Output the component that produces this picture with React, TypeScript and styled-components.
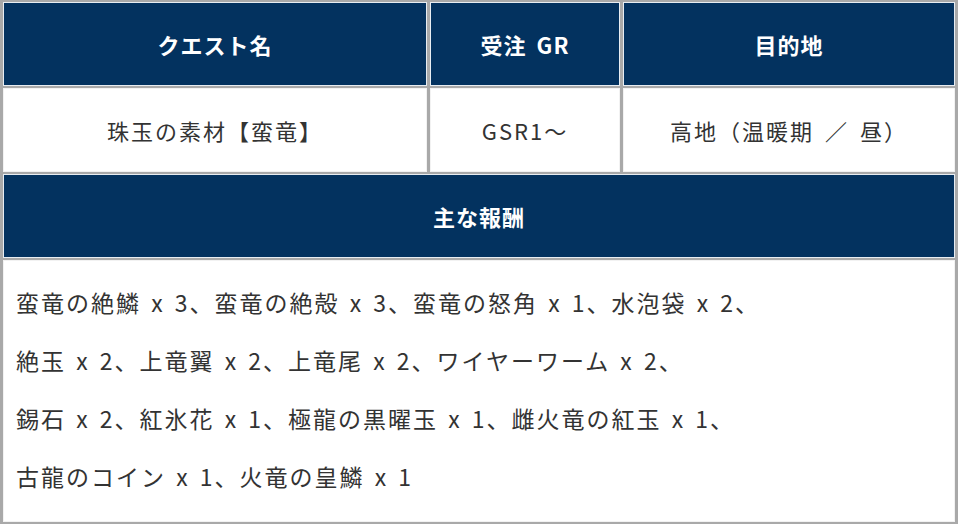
import styled, { createGlobalStyle } from "styled-components";

const GlobalStyle = createGlobalStyle`
  html, body {
    margin: 0;
    padding: 0;
    background: #ffffff;
  }
  body {
    font-family: "Noto Sans CJK JP", "Noto Sans", sans-serif;
    color: #333333;
  }
`;

const Table = styled.table`
  width: 958px;
  table-layout: fixed;
  border-collapse: separate;
  border-spacing: 3px 2px;
  background: #a9a9a9;
`;

const HeadCell = styled.th<{ $height: number }>`
  height: ${(p) => p.$height}px;
  padding: 0;
  background: #03325f;
  border: 1px solid #e8edf2;
  color: #ffffff;
  font-size: 22px;
  font-weight: 700;
  letter-spacing: 1px;
  word-spacing: 4px;
  text-align: center;
  vertical-align: middle;
`;

const DataCell = styled.td`
  height: 82px;
  padding: 0;
  background: #ffffff;
  border: 1px solid #f2f2f2;
  font-size: 22px;
  letter-spacing: 2px;
  word-spacing: 4px;
  text-align: center;
  vertical-align: middle;
  color: #333333;
`;

const RewardCell = styled.td`
  height: 236px;
  padding: 12px;
  background: #ffffff;
  border: 1px solid #f2f2f2;
  vertical-align: top;
`;

const RewardLine = styled.p`
  margin: 0;
  font-size: 23px;
  letter-spacing: 2px;
  word-spacing: 3px;
  line-height: 58px;
  white-space: nowrap;
  color: #333333;
`;

const rewards = [
  "蛮竜の絶鱗 x 3、蛮竜の絶殻 x 3、蛮竜の怒角 x 1、水泡袋 x 2、",
  "絶玉 x 2、上竜翼 x 2、上竜尾 x 2、ワイヤーワーム x 2、",
  "錫石 x 2、紅氷花 x 1、極龍の黒曜玉 x 1、雌火竜の紅玉 x 1、",
  "古龍のコイン x 1、火竜の皇鱗 x 1",
];

export default function App() {
  return (
    <>
      <GlobalStyle />
      <Table>
        <colgroup>
          <col style={{ width: 424 }} />
          <col style={{ width: 190 }} />
          <col style={{ width: 332 }} />
        </colgroup>
        <tbody>
          <tr>
            <HeadCell $height={82}>クエスト名</HeadCell>
            <HeadCell $height={82}>受注 GR</HeadCell>
            <HeadCell $height={82}>目的地</HeadCell>
          </tr>
          <tr>
            <DataCell>珠玉の素材【蛮竜】</DataCell>
            <DataCell>GSR1～</DataCell>
            <DataCell>高地（温暖期 ／ 昼）</DataCell>
          </tr>
          <tr>
            <HeadCell $height={82} colSpan={3}>
              主な報酬
            </HeadCell>
          </tr>
          <tr>
            <RewardCell colSpan={3}>
              {rewards.map((line) => (
                <RewardLine key={line}>{line}</RewardLine>
              ))}
            </RewardCell>
          </tr>
        </tbody>
      </Table>
    </>
  );
}
